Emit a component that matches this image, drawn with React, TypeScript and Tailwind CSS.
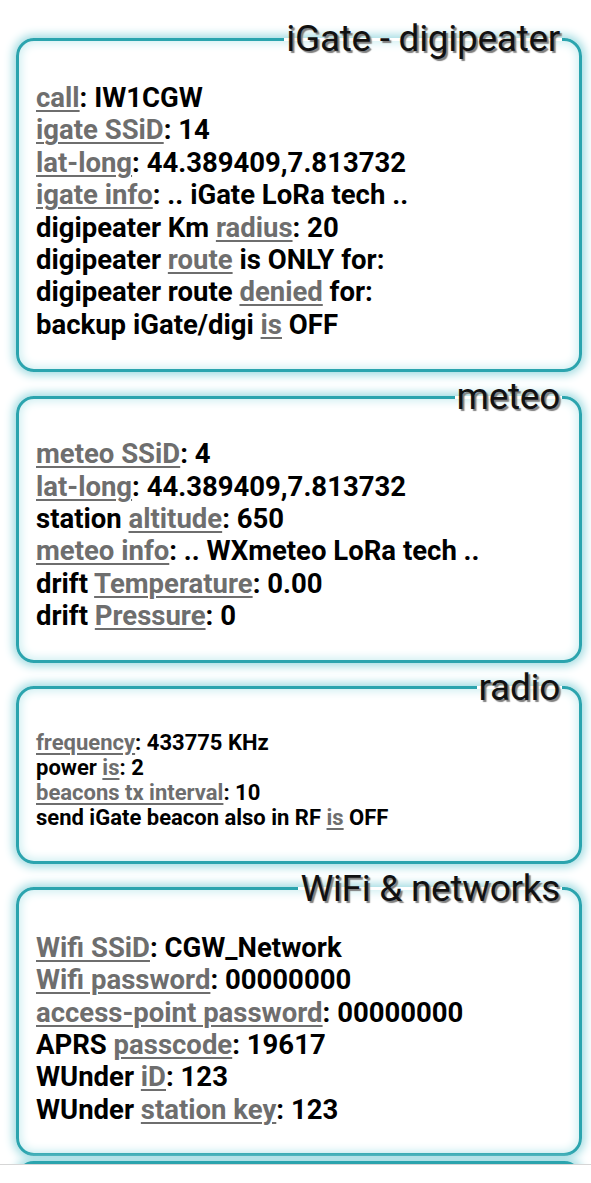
import React from "react";

type Seg = { t: string; l?: boolean };
type Line = Seg[];

const L = (t: string): Seg => ({ t, l: true });
const T = (t: string): Seg => ({ t });

const cards: { title: string; small?: boolean; pad: string; lines: Line[] }[] = [
  {
    title: "iGate - digipeater",
    pad: "pt-[23px] pb-[28px]",
    lines: [
      [L("call"), T(": IW1CGW")],
      [L("igate SSiD"), T(": 14")],
      [L("lat-long"), T(": 44.389409,7.813732")],
      [L("igate info"), T(": .. iGate LoRa tech ..")],
      [T("digipeater Km "), L("radius"), T(": 20")],
      [T("digipeater "), L("route"), T(" is ONLY for:")],
      [T("digipeater route "), L("denied"), T(" for:")],
      [T("backup iGate/digi "), L("is"), T(" OFF")],
    ],
  },
  {
    title: "meteo",
    pad: "pt-[21px] pb-[27px]",
    lines: [
      [L("meteo SSiD"), T(": 4")],
      [L("lat-long"), T(": 44.389409,7.813732")],
      [T("station "), L("altitude"), T(": 650")],
      [L("meteo info"), T(": .. WXmeteo LoRa tech ..")],
      [T("drift "), L("Temperature"), T(": 0.00")],
      [T("drift "), L("Pressure"), T(": 0")],
    ],
  },
  {
    title: "radio",
    small: true,
    pad: "pt-[22px] pb-[31px]",
    lines: [
      [L("frequency"), T(": 433775 KHz")],
      [T("power "), L("is"), T(": 2")],
      [L("beacons tx interval"), T(": 10")],
      [T("send iGate beacon also in RF "), L("is"), T(" OFF")],
    ],
  },
  {
    title: "WiFi & networks",
    pad: "pt-[23px] pb-[27px]",
    lines: [
      [L("Wifi SSiD"), T(": CGW_Network")],
      [L("Wifi password"), T(": 00000000")],
      [L("access-point password"), T(": 00000000")],
      [T("APRS "), L("passcode"), T(": 19617")],
      [T("WUnder "), L("iD"), T(": 123")],
      [T("WUnder "), L("station key"), T(": 123")],
    ],
  },
];

function Card({
  title,
  small,
  pad,
  lines,
}: {
  title: string;
  small?: boolean;
  pad: string;
  lines: Line[];
}) {
  return (
    <fieldset
      className={`border-[3px] border-[#2ba4ae] rounded-[18px] bg-white px-[17px] ${pad} shadow-[0_0_10px_3px_#9fdbe1,inset_0_0_10px_2px_#cdeef1]`}
    >
      <legend className="ml-auto px-[2px] text-[37px] leading-[40px] font-normal text-[#111] tracking-[-0.3px] [text-shadow:2px_2px_1px_#7f7f7f]">
        {title}
      </legend>
      <div
        className={
          small
            ? "text-[22px] leading-[25px] font-bold text-black"
            : "text-[27.5px] leading-[32.4px] font-bold text-black"
        }
      >
        {lines.map((line, i) => (
          <div key={i} className="whitespace-pre">
            {line.map((s, j) =>
              s.l ? (
                <span
                  key={j}
                  className="text-[#6e6e6e] underline decoration-[2px] underline-offset-[3px]"
                >
                  {s.t}
                </span>
              ) : (
                <span key={j}>{s.t}</span>
              )
            )}
          </div>
        ))}
      </div>
    </fieldset>
  );
}

export default function App() {
  return (
    <div className="min-h-[1183px] bg-white font-['Roboto','Liberation_Sans',sans-serif] overflow-hidden">
      <div className="pt-[19px] pl-[16px] pr-[9px] flex flex-col gap-[5px]">
        {cards.map((c) => (
          <Card key={c.title} {...c} />
        ))}
        <div className="h-[60px] border-[3px] border-[#2ba4ae] rounded-[18px] bg-white shadow-[0_0_10px_3px_#9fdbe1,inset_0_0_10px_2px_#cdeef1]" />
      </div>
      <div className="fixed bottom-0 left-0 right-0 h-[19px] bg-white border-t border-[#d6d6d6]" />
    </div>
  );
}
